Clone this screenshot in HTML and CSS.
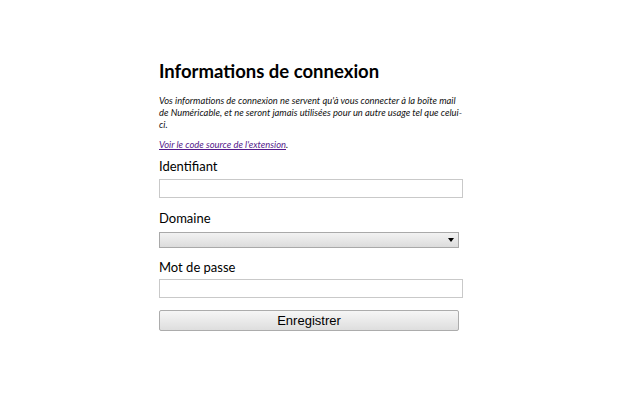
FILE: index.html
```html
<!DOCTYPE html>
<html lang="fr">
<head>
  <meta charset="UTF-8" />
  <title>Options</title>
  <link rel="stylesheet" href="styles.css">
</head>
<body>
  <div class="page">
    <h1>Informations de connexion</h1>

    <p class="notice">Vos informations de connexion ne servent qu'à vous connecter à la boîte mail de Numéricable, et ne seront jamais utilisées pour un autre usage tel que celui-ci.</p>

    <p class="notice source"><a href="#">Voir le code source de l'extension</a>.</p>

    <form class="form">
      <label for="login">Identifiant</label>
      <input type="text" id="login" class="field">

      <label for="domain">Domaine</label>
      <div class="select-wrap">
        <select id="domain" class="select"></select>
      </div>

      <label for="password" class="tight">Mot de passe</label>
      <input type="password" id="password" class="field">

      <button type="button" class="save">Enregistrer</button>
    </form>
  </div>
</body>
</html>
```

FILE: styles.css
```css
body {
  margin: 0;
  font-family: Lato, "Noto Sans", sans-serif;
  color: #000;
  background: #fff;
}

.page {
  width: 304px;
  margin: 0 auto;
  padding: 60px 18px 0 0;
}

h1 {
  font-size: 18.5px;
  line-height: 23px;
  font-weight: bold;
  margin: 0 0 12px;
}

.notice {
  font-size: 9.4px;
  font-style: italic;
  line-height: 12px;
  color: #111;
  margin: 0 0 8px;
}

.notice.source {
  margin-bottom: 7px;
}

.notice a {
  color: #551a8b;
}

.form {
  display: flex;
  flex-direction: column;
  align-items: flex-start;
}

label {
  font-size: 13px;
  margin-bottom: 5px;
}

label.tight {
  margin-bottom: 4px;
}

.field {
  width: 300px;
  height: 15px;
  padding: 1px;
  border: 1px solid #c9c9c9;
  margin: 0 0 12px;
}

.select-wrap {
  position: relative;
  margin: 1px 0 11px;
}

.select-wrap::after {
  content: "";
  position: absolute;
  right: 5px;
  top: 6px;
  border-left: 3px solid transparent;
  border-right: 3px solid transparent;
  border-top: 4px solid #000;
  pointer-events: none;
}

.select {
  display: block;
  width: 300px;
  height: 16px;
  margin: 0;
  appearance: none;
  border: 1px solid #a9a9a9;
  border-radius: 0;
  background: linear-gradient(#f2f2f2, #dcdcdc);
}

.save {
  width: 300px;
  height: 21px;
  font-family: "Liberation Sans", Arial, sans-serif;
  font-size: 13px;
  padding: 0;
  border: 1px solid #acacac;
  border-radius: 2px;
  background: linear-gradient(#f6f6f6, #dedede);
  color: #000;
}
```
